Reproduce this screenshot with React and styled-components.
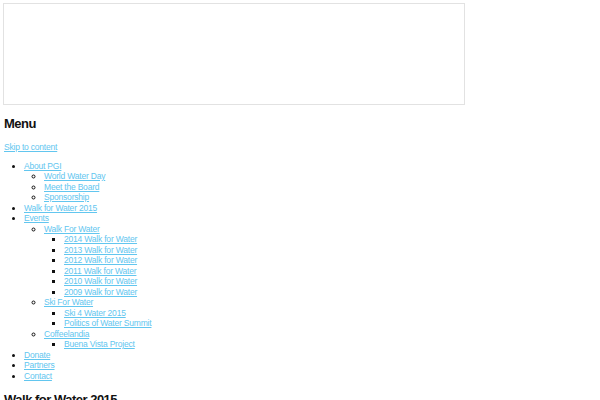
import React from "react";
import styled, { createGlobalStyle } from "styled-components";

const GlobalStyle = createGlobalStyle`
  body {
    margin: 0;
    padding: 4px;
    background: #fff;
    font-family: "Liberation Sans", Arial, sans-serif;
    font-size: 8.5px;
    color: #222;
  }
`;

const menu = [
  {
    label: "About PGI",
    children: [
      { label: "World Water Day" },
      { label: "Meet the Board" },
      { label: "Sponsorship" },
    ],
  },
  { label: "Walk for Water 2015" },
  {
    label: "Events",
    children: [
      {
        label: "Walk For Water",
        children: [
          { label: "2014 Walk for Water" },
          { label: "2013 Walk for Water" },
          { label: "2012 Walk for Water" },
          { label: "2011 Walk for Water" },
          { label: "2010 Walk for Water" },
          { label: "2009 Walk for Water" },
        ],
      },
      {
        label: "Ski For Water",
        children: [
          { label: "Ski 4 Water 2015" },
          { label: "Politics of Water Summit" },
        ],
      },
      {
        label: "Coffeelandia",
        children: [{ label: "Buena Vista Project" }],
      },
    ],
  },
  { label: "Donate" },
  { label: "Partners" },
  { label: "Contact" },
];

const bullets = ["disc", "circle", "square"];

const MenuList = ({ items, level = 0 }) => (
  <List level={level} bullet={bullets[Math.min(level, 2)]}>
    {items.map(item => (
      <Item key={item.label}>
        <Link href="#">{item.label}</Link>
        {item.children && <MenuList items={item.children} level={level + 1} />}
      </Item>
    ))}
  </List>
);

const App = () => {
  return (
    <>
      <GlobalStyle />
      <Banner />
      <Heading>Menu</Heading>
      <SkipLink href="#">Skip to content</SkipLink>
      <MenuList items={menu} />
      <Heading>Walk for Water 2015</Heading>
    </>
  );
};

export default App;

const Banner = styled.div`
  width: 462px;
  height: 102px;
  margin: -1px 0 0 -1px;
  border: 1px solid #e2e2e2;
  box-sizing: border-box;
`;

const Heading = styled.h2`
  margin: 11px 0 10px;
  font-size: 13px;
  line-height: 16px;
  font-weight: bold;
  letter-spacing: -0.5px;
  color: #111;
`;

const SkipLink = styled.a`
  display: block;
  line-height: 10.5px;
  letter-spacing: -0.2px;
  color: #62c6ef;
  text-decoration: underline;
`;

const List = styled.ul`
  margin: ${props => (props.level === 0 ? "8px 0" : "0")};
  padding-left: 20px;
  font-size: 9px;
  list-style-type: ${props => props.bullet};
  color: #111;
`;

const Item = styled.li`
  line-height: 10.5px;
`;

const Link = styled.a`
  font-size: 8.5px;
  letter-spacing: -0.2px;
  color: #62c6ef;
  text-decoration: underline;
`;
